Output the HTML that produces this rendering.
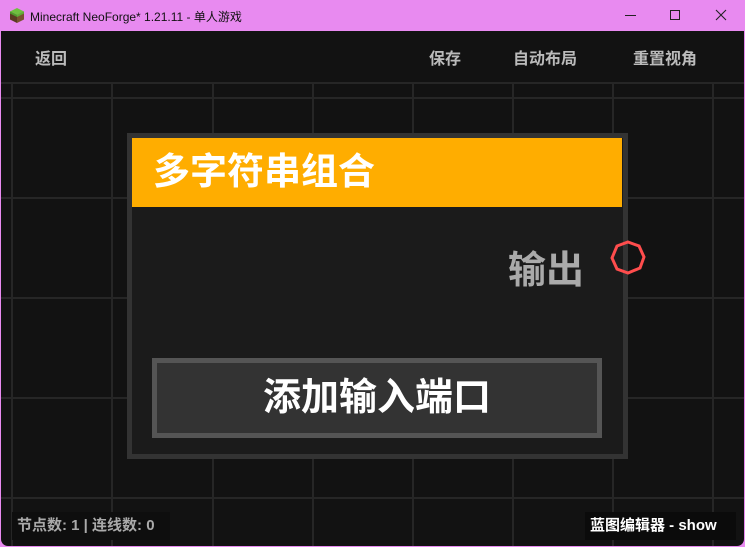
<!DOCTYPE html>
<html><head><meta charset="utf-8"><style>
*{margin:0;padding:0;box-sizing:border-box}
body{width:745px;height:547px;overflow:hidden;background:#e88af0;font-family:"Liberation Sans","Noto Sans CJK SC",sans-serif;position:relative}
.win{position:absolute;left:1px;top:31px;width:743px;height:515px;background:#121212;border-radius:0 0 7px 7px;overflow:hidden}
.title{position:absolute;left:0;top:0;width:745px;height:31px;color:#111;font-size:12px}
.abs{position:absolute}
.vl{position:absolute;top:52px;width:2px;height:470px;background:#262626}
.hl{position:absolute;left:0;width:743px;height:2px;background:#262626}
.tb{position:absolute;color:#bbb;font-size:16px;top:14px;font-weight:bold}
</style></head><body>
<div class="title">
 <svg class="abs" style="left:9px;top:7px" width="16" height="17" viewBox="0 0 16 17"><polygon points="8,1 15,4.5 8,8 1,4.5" fill="#6fbf3f"/><polygon points="1,4.5 8,8 8,16 1,12.5" fill="#5a3b22"/><polygon points="15,4.5 8,8 8,16 15,12.5" fill="#7a5230"/><polygon points="1,4.5 8,8 8,10 1,6.5" fill="#4f9a2c"/><polygon points="15,4.5 8,8 8,10 15,6.5" fill="#5fae35"/></svg>
 <div class="abs" style="left:30px;top:8px">Minecraft NeoForge* 1.21.11 - 单人游戏</div>
 <div class="abs" style="left:625px;top:15px;width:11px;height:1px;background:#222"></div>
 <div class="abs" style="left:670px;top:10px;width:10px;height:10px;border:1px solid #222"></div>
 <svg class="abs" style="left:715px;top:9px" width="12" height="12"><path d="M1 1L11 11M11 1L1 11" stroke="#222" stroke-width="1.1"/></svg>
</div>
<div class="win">
 <div class="tb" style="left:34px">返回</div>
 <div class="tb" style="left:428px">保存</div>
 <div class="tb" style="left:512px">自动布局</div>
 <div class="tb" style="left:632px">重置视角</div>
 <div class="hl" style="top:51px"></div>
 <div class="hl" style="top:66px"></div>
 <div class="hl" style="top:166px"></div>
 <div class="hl" style="top:266px"></div>
 <div class="hl" style="top:366px"></div>
 <div class="hl" style="top:466px"></div>
 <div class="vl" style="left:10px"></div>
 <div class="vl" style="left:110px"></div>
 <div class="vl" style="left:211px"></div>
 <div class="vl" style="left:311px"></div>
 <div class="vl" style="left:411px"></div>
 <div class="vl" style="left:511px"></div>
 <div class="vl" style="left:611px"></div>
 <div class="vl" style="left:711px"></div>
 <div class="abs" style="left:126px;top:102px;width:501px;height:326px;background:#1b1b1b;border:5px solid #333"></div>
 <div class="abs" style="left:131px;top:107px;width:490px;height:69px;background:#ffad00"></div>
 <div class="abs" style="left:152px;top:119px;color:#fff;font-size:37px;line-height:44px;font-weight:bold">多字符串组合</div>
 <div class="abs" style="left:507px;top:217px;color:#aaa;font-size:38px;line-height:46px;font-weight:bold">输出</div>
 <svg class="abs" style="left:607px;top:206px" width="42" height="42"><polygon points="20,5 31,9 36,20 32,31 20,36 9,32 4,21 9,9" fill="none" stroke="#ff4d4d" stroke-width="3"/></svg>
 <div class="abs" style="left:151px;top:327px;width:450px;height:80px;background:#333;border:5px solid #555;color:#fff;font-size:38px;line-height:70px;text-align:center;font-weight:bold">添加输入端口</div>
 <div class="abs" style="left:11px;top:481px;width:158px;height:28px;background:#0e0e0e;color:#aaa;font-size:15px;line-height:28px;padding-left:5px;font-weight:bold">节点数: 1 | 连线数: 0</div>
 <div class="abs" style="left:584px;top:481px;width:151px;height:28px;background:#0b0b0b;color:#fff;font-size:15px;line-height:28px;padding-left:5px;font-weight:bold">蓝图编辑器 - show</div>
</div>
</body></html>
